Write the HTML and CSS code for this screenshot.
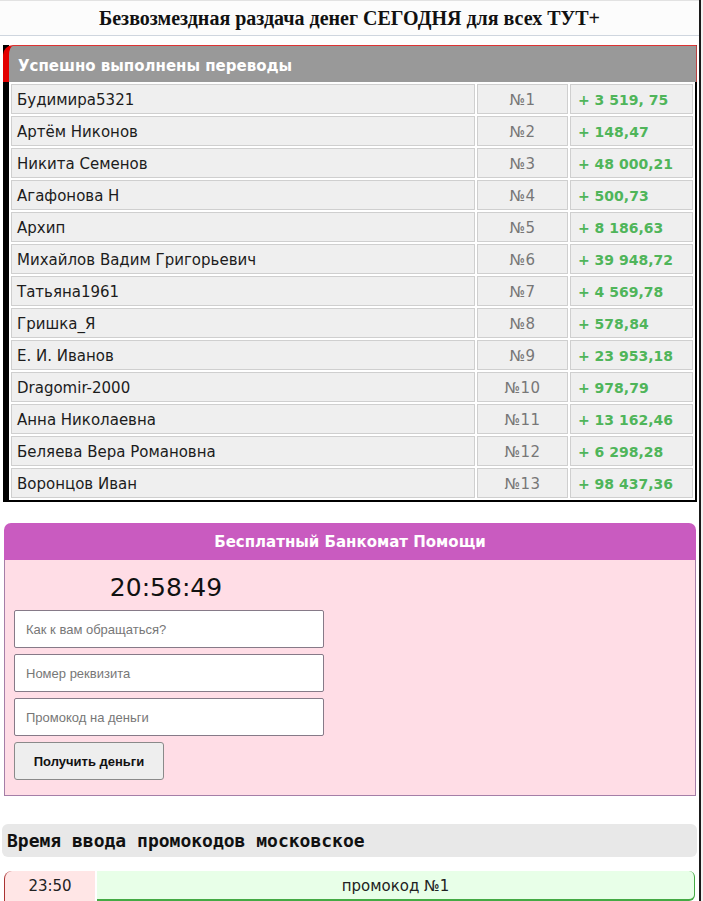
FILE: index.html
```html
<!DOCTYPE html>
<html lang="ru">
<head>
<meta charset="utf-8">
<title>Безвозмездная раздача денег</title>
<link rel="stylesheet" href="styles.css">
</head>
<body>
<div class="page">
  <header class="top">
    <h1 class="title">Безвозмездная раздача денег СЕГОДНЯ для всех ТУТ+</h1>
  </header>

  <section class="transfers">
    <div class="transfers-head">Успешно выполнены переводы</div>
    <table class="list">
      <colgroup><col><col class="c-num"><col class="c-sum"></colgroup>
      <tr><td class="name">Будимира5321</td><td class="num">№1</td><td class="sum">+ 3 519, 75</td></tr>
      <tr><td class="name">Артём Никонов</td><td class="num">№2</td><td class="sum">+ 148,47</td></tr>
      <tr><td class="name">Никита Семенов</td><td class="num">№3</td><td class="sum">+ 48 000,21</td></tr>
      <tr><td class="name">Агафонова Н</td><td class="num">№4</td><td class="sum">+ 500,73</td></tr>
      <tr><td class="name">Архип</td><td class="num">№5</td><td class="sum">+ 8 186,63</td></tr>
      <tr><td class="name">Михайлов Вадим Григорьевич</td><td class="num">№6</td><td class="sum">+ 39 948,72</td></tr>
      <tr><td class="name">Татьяна1961</td><td class="num">№7</td><td class="sum">+ 4 569,78</td></tr>
      <tr><td class="name">Гришка_Я</td><td class="num">№8</td><td class="sum">+ 578,84</td></tr>
      <tr><td class="name">Е. И. Иванов</td><td class="num">№9</td><td class="sum">+ 23 953,18</td></tr>
      <tr><td class="name">Dragomir-2000</td><td class="num">№10</td><td class="sum">+ 978,79</td></tr>
      <tr><td class="name">Анна Николаевна</td><td class="num">№11</td><td class="sum">+ 13 162,46</td></tr>
      <tr><td class="name">Беляева Вера Романовна</td><td class="num">№12</td><td class="sum">+ 6 298,28</td></tr>
      <tr><td class="name">Воронцов Иван</td><td class="num">№13</td><td class="sum">+ 98 437,36</td></tr>
    </table>
  </section>

  <section class="atm">
    <div class="atm-head">Бесплатный Банкомат Помощи</div>
    <div class="atm-body">
      <form class="atm-form">
        <div class="clock">20:58:49</div>
        <input class="field" type="text" placeholder="Как к вам обращаться?">
        <input class="field" type="text" placeholder="Номер реквизита">
        <input class="field" type="text" placeholder="Промокод на деньги">
        <button class="btn" type="button">Получить деньги</button>
      </form>
    </div>
  </section>

  <div class="promo-title">Время ввода промокодов московское</div>

  <div class="promo-row">
    <div class="promo-time">23:50</div>
    <div class="promo-name">промокод №1</div>
  </div>
</div>
</body>
</html>
```

FILE: styles.css
```css
html, body {
  margin: 0;
  padding: 0;
  background: #f2f2f2;
}

.page {
  width: 699px;
  min-height: 901px;
  background: #fff;
  border-right: 2px solid #1a1a1a;
  font-family: "DejaVu Sans", Verdana, sans-serif;
  overflow: hidden;
}

.top {
  height: 34px;
  border-top: 1px solid #e2e2e2;
  border-bottom: 1px solid #cfd6df;
  background: #fcfcfc;
  display: flex;
  align-items: center;
  justify-content: center;
}

.title {
  margin: 0;
  font-family: "Liberation Serif", "Times New Roman", serif;
  font-weight: bold;
  font-size: 20px;
  color: #111;
}

.transfers {
  margin: 9px 2px 0 3px;
  border-left: 6px solid #000;
  border-right: 2px solid #000;
  border-bottom: 2px solid #000;
}

.transfers-head {
  margin: 0 -2px 0 -6px;
  height: 36px;
  background: #999;
  border-top: 1px solid #d33;
  border-left: 6px solid #e30000;
  border-right: 1px solid #b44;
  border-top-left-radius: 10px;
  color: #fff;
  font-weight: bold;
  font-size: 15px;
  line-height: 40px;
  padding-left: 9px;
}

.list {
  width: 100%;
  table-layout: fixed;
  border-spacing: 2px;
  margin-top: 0;
}

.c-num { width: 91px; }
.c-sum { width: 123px; }

.list td {
  height: 30px;
  box-sizing: border-box;
  background: #efefef;
  border: 1px solid #cfcfcf;
  padding: 2px 5px 0;
  font-size: 15px;
  white-space: nowrap;
  overflow: hidden;
}

.list td.name { color: #1c1c1c; }

.list td.num {
  color: #777;
  text-align: center;
  letter-spacing: 0.5px;
}

.list td.sum {
  color: #4fb55a;
  font-weight: bold;
  font-size: 14px;
  padding-left: 7px;
}

.atm {
  margin: 21px 3px 0 4px;
}

.atm-head {
  height: 37px;
  background: #c95bc0;
  border-radius: 7px 7px 0 0;
  color: #fff;
  font-weight: bold;
  font-size: 15px;
  line-height: 39px;
  text-align: center;
}

.atm-body {
  background: #ffdde6;
  border: 1px solid #a57ea7;
  border-top: none;
  padding: 10px 9px 15px;
}

.atm-form {
  width: 310px;
  display: flex;
  flex-direction: column;
  gap: 6px;
  margin: 0;
}

.clock {
  height: 40px;
  margin-bottom: -6px;
  padding-right: 6px;
  text-align: center;
  font-size: 25px;
  line-height: 36px;
  color: #111;
}

.field {
  height: 38px;
  box-sizing: border-box;
  border: 1px solid #867a88;
  border-radius: 2px;
  background: #fff;
  padding: 0 11px;
  font-family: "Liberation Sans", Arial, sans-serif;
  font-size: 13px;
  margin: 0;
}

.field::placeholder {
  color: #777;
}

.btn {
  align-self: flex-start;
  width: 150px;
  height: 38px;
  background: #eee;
  border: 1px solid #8a8a8a;
  border-radius: 3px;
  font-family: "Liberation Sans", Arial, sans-serif;
  font-weight: bold;
  font-size: 13px;
  color: #111;
  margin: 0;
}

.promo-title {
  margin: 28px 2px 0 2px;
  height: 33px;
  background: #e8e8e8;
  border-radius: 6px;
  padding-left: 5px;
  font-family: "DejaVu Sans Mono", monospace;
  font-weight: bold;
  font-size: 18px;
  line-height: 34px;
  color: #111;
}

.promo-row {
  margin: 14px 4px 0 4px;
  display: flex;
  gap: 2px;
  height: 30px;
  font-size: 15px;
  color: #222;
}

.promo-time {
  width: 90px;
  background: #ffe6e6;
  border-left: 1px solid #a33;
  border-top-left-radius: 8px;
  text-align: center;
  line-height: 30px;
}

.promo-name {
  flex: 1;
  background: #e8ffe8;
  border-right: 1px solid #4a4;
  border-bottom: 2px solid #4a4;
  border-radius: 0 6px 6px 0;
  text-align: center;
  line-height: 30px;
}
```
